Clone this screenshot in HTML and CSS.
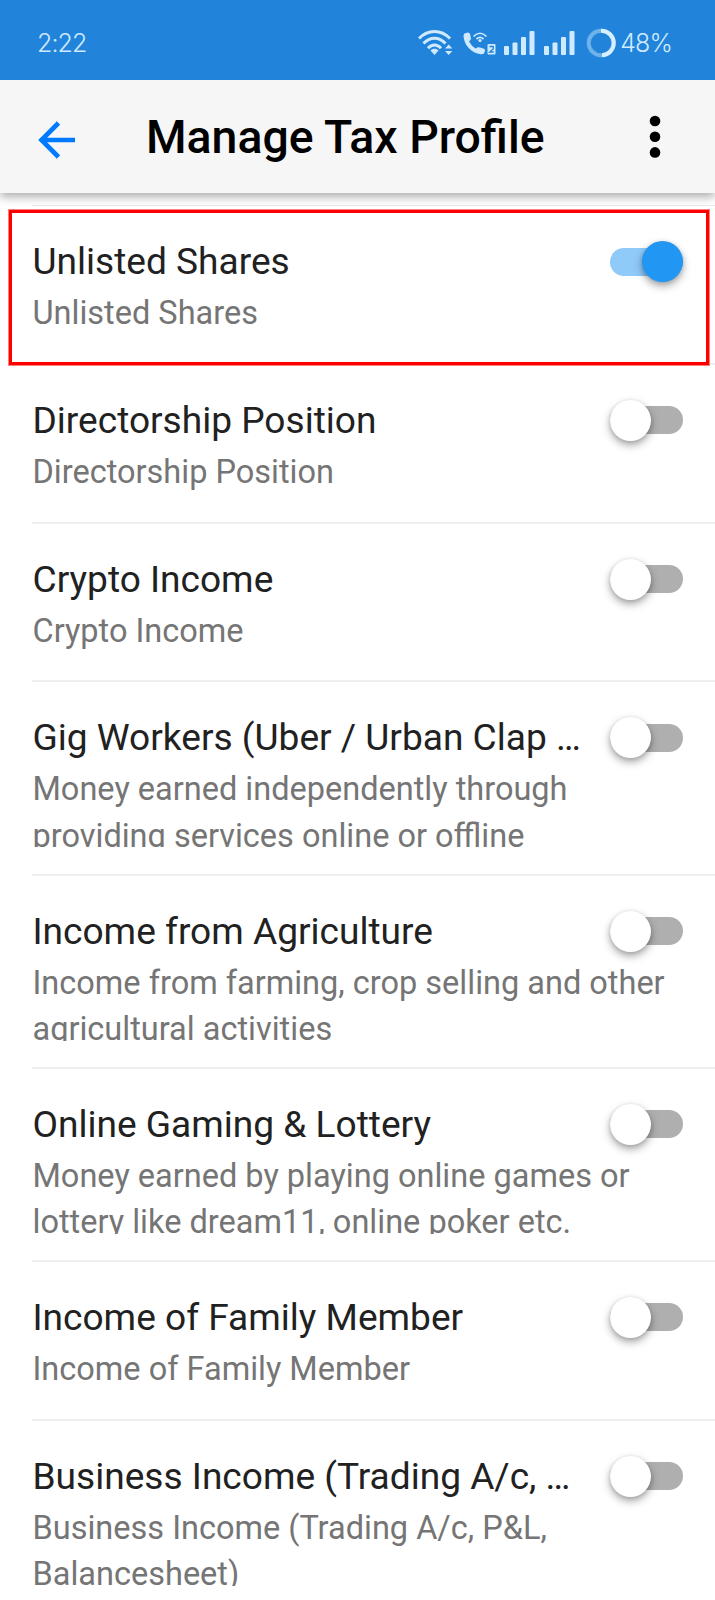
FILE: index.html
```html
<!DOCTYPE html>
<html lang="en">
<head>
<meta charset="utf-8">
<title>Manage Tax Profile</title>
<link rel="stylesheet" href="styles.css">
</head>
<body>
<div class="statusbar">
  <span class="time">2:22</span>
  <div class="indicators">
    <svg class="wifi" width="36" height="26" viewBox="0 0 36 26" fill="none" stroke="#cfeaff" stroke-width="3">
      <path d="M1 8.500C10-.8 23-.8 32 8.500M5.500 13.500C12 6.500 21 6.500 27.500 13.500M10 18.300C14 14 19 14 23 18.300"/>
      <path d="M12.500 20.500C15 18 18 18 20.500 20.500L16.500 25Z" fill="#cfeaff" stroke="none"/>
      <path d="M27 18.500L30.700 14.500L34.300 18.500ZM27 21L30.700 25L34.300 21Z" fill="#cfeaff" stroke="none"/>
    </svg>
    <svg class="call" width="34" height="25" viewBox="0 0 34 25">
      <path d="M1.500 2.500L5 1.500Q6.500 1.500 7 3L8 7.500Q8 9 6 10.500Q8.500 15 12.500 17.500L15 16.200Q16 16 17 16.500L21 17.800Q22.300 18.500 22 20L21 22.500Q20 23.500 18 23.300C8 22 1 14 .5 5Q.5 3.500 1.500 2.500Z" fill="#cfeaff"/>
      <path d="M10.500 5.500Q17 -1 23.500 5.500M13.500 8Q17 4.800 20.500 8" fill="none" stroke="#cfeaff" stroke-width="1.700"/>
      <circle cx="17" cy="9.500" r="1.600" fill="#cfeaff"/>
      <rect x="24.500" y="13" width="8" height="10.500" rx="1" fill="#cfeaff"/>
      <path d="M26.500 15.500H30.200V18L26.700 21H30.700" fill="none" stroke="#2184da" stroke-width="1.300"/>
    </svg>
    <svg class="signal" width="31" height="26" viewBox="0 0 31 26" fill="#cfeaff">
      <rect x="0" y="16" width="5" height="9" rx="1"/><rect x="8.500" y="12.500" width="5" height="12.500" rx="1"/><rect x="17" y="7" width="5" height="18" rx="1"/><rect x="25.500" y="1" width="5" height="24" rx="1"/>
    </svg>
    <svg class="signal second" width="31" height="26" viewBox="0 0 31 26" fill="#cfeaff">
      <rect x="0" y="16" width="5" height="9" rx="1"/><rect x="8.500" y="12.500" width="5" height="12.500" rx="1"/><rect x="17" y="7" width="5" height="18" rx="1"/><rect x="25.500" y="1" width="5" height="24" rx="1"/>
    </svg>
    <svg class="battery" width="30" height="30" viewBox="0 0 30 30" fill="none" stroke-width="4">
      <circle cx="15" cy="15" r="12.300" stroke="#6eb2ec"/>
      <path d="M15 2.700A12.300 12.300 0 0 1 16 27.300" stroke="#d8efff"/>
    </svg>
    <span class="percent">48%</span>
  </div>
</div>
<header class="toolbar">
  <svg class="back" width="38" height="38" viewBox="0 0 38 38" fill="none" stroke="#007aff" stroke-width="4.600">
    <path d="M37 19H4M20.500 2L3.500 19L20.500 36"/>
  </svg>
  <h1 class="heading">Manage Tax Profile</h1>
  <svg class="more" width="12" height="44" viewBox="0 0 12 44">
    <circle cx="6" cy="6" r="5.300"/><circle cx="6" cy="21.700" r="5.300"/><circle cx="6" cy="37.400" r="5.300"/>
  </svg>
</header>
<main class="list">
  <section class="row marked">
    <div class="top"><h2 class="title">Unlisted Shares</h2><span class="toggle on"></span></div>
    <p class="desc">Unlisted Shares</p>
  </section>
  <section class="row">
    <div class="top"><h2 class="title">Directorship Position</h2><span class="toggle"></span></div>
    <p class="desc">Directorship Position</p>
  </section>
  <section class="row">
    <div class="top"><h2 class="title">Crypto Income</h2><span class="toggle"></span></div>
    <p class="desc">Crypto Income</p>
  </section>
  <section class="row tall">
    <div class="top"><h2 class="title">Gig Workers (Uber / Urban Clap …</h2><span class="toggle"></span></div>
    <p class="desc">Money earned independently through<br>providing services online or offline</p>
  </section>
  <section class="row tall">
    <div class="top"><h2 class="title">Income from Agriculture</h2><span class="toggle"></span></div>
    <p class="desc">Income from farming, crop selling and other<br>agricultural activities</p>
  </section>
  <section class="row tall">
    <div class="top"><h2 class="title">Online Gaming &amp; Lottery</h2><span class="toggle"></span></div>
    <p class="desc">Money earned by playing online games or<br>lottery like dream11, online poker etc.</p>
  </section>
  <section class="row">
    <div class="top"><h2 class="title">Income of Family Member</h2><span class="toggle"></span></div>
    <p class="desc">Income of Family Member</p>
  </section>
  <section class="row tall">
    <div class="top"><h2 class="title">Business Income (Trading A/c, …</h2><span class="toggle"></span></div>
    <p class="desc">Business Income (Trading A/c, P&amp;L,<br>Balancesheet)</p>
  </section>
</main>
</body>
</html>
```

FILE: styles.css
```css
*, *::before, *::after { box-sizing: border-box; }
body {
  margin: 0;
  height: 1600px;
  overflow: hidden;
  display: flex;
  flex-direction: column;
  background: #fff;
  font-family: Roboto, sans-serif;
}
h1, h2, p { margin: 0; font-weight: 400; white-space: nowrap; }
svg { display: block; flex: none; }

.statusbar {
  flex: none;
  position: relative;
  z-index: 2;
  height: 80px;
  padding: 6px 43px 0 37px;
  display: flex;
  align-items: center;
  justify-content: space-between;
  background: #2184da;
  color: #cfeaff;
  font-family: Inter, sans-serif;
  font-weight: 300;
  font-size: 25px;
  letter-spacing: -.9px;
}
.indicators { display: flex; align-items: center; }
.call { margin-left: 9px; }
.signal { margin-left: 7px; }
.signal.second { margin-left: 9px; }
.battery { margin-left: 11px; }
.percent { margin-left: 4px; }

.toolbar {
  flex: none;
  position: relative;
  z-index: 1;
  height: 113px;
  padding: 0 54px 0 38px;
  display: flex;
  align-items: center;
  background: #f6f6f6;
  box-shadow: 0 4px 9px rgba(0, 0, 0, .32);
}
.back { margin-top: 6px; }
.heading {
  margin-left: 70px;
  font-size: 46.400px;
  font-weight: 500;
  line-height: 56px;
  color: #000;
}
.more { margin-left: auto; }

.list { flex: none; padding-top: 13px; }
.list::before {
  content: "";
  display: block;
  height: 1px;
  margin: -1px 0 0 32px;
  background: #e8e8e8;
}
.row {
  position: relative;
  height: 158.800px;
  margin-left: 32px;
  padding-top: 32px;
  border-bottom: 2px solid #eee;
}
.row.tall { height: 193.200px; }
.row.marked::after {
  content: "";
  position: absolute;
  left: -23px;
  right: 6px;
  top: 4px;
  height: 155px;
  border: 3px solid #f00;
  box-shadow: 0 0 0 1px rgba(255, 0, 0, .5);
}
.top {
  height: 48px;
  padding-right: 32px;
  display: flex;
  align-items: center;
  justify-content: space-between;
}
.title {
  padding-left: .5px;
  font-size: 37.100px;
  line-height: 48px;
  color: #212121;
}
.desc {
  height: 85px;
  overflow: hidden;
  padding: 4px 0 0 .5px;
  font-size: 32.500px;
  line-height: 46.500px;
  color: #757575;
}
.row:not(.tall) .desc { height: 60px; }

.toggle {
  flex: none;
  width: 73px;
  height: 28px;
  margin-bottom: 1px;
  border-radius: 14px;
  display: flex;
  align-items: center;
  background: #afafaf;
}
.toggle::before {
  content: "";
  flex: none;
  width: 41px;
  height: 41px;
  border-radius: 50%;
  background: #fff;
  box-shadow: 0 4px 9px rgba(0, 0, 0, .34), 0 1px 4px rgba(0, 0, 0, .12);
}
.toggle.on { justify-content: flex-end; background: #90caf9; }
.toggle.on::before { background: #2196f3; }
```
